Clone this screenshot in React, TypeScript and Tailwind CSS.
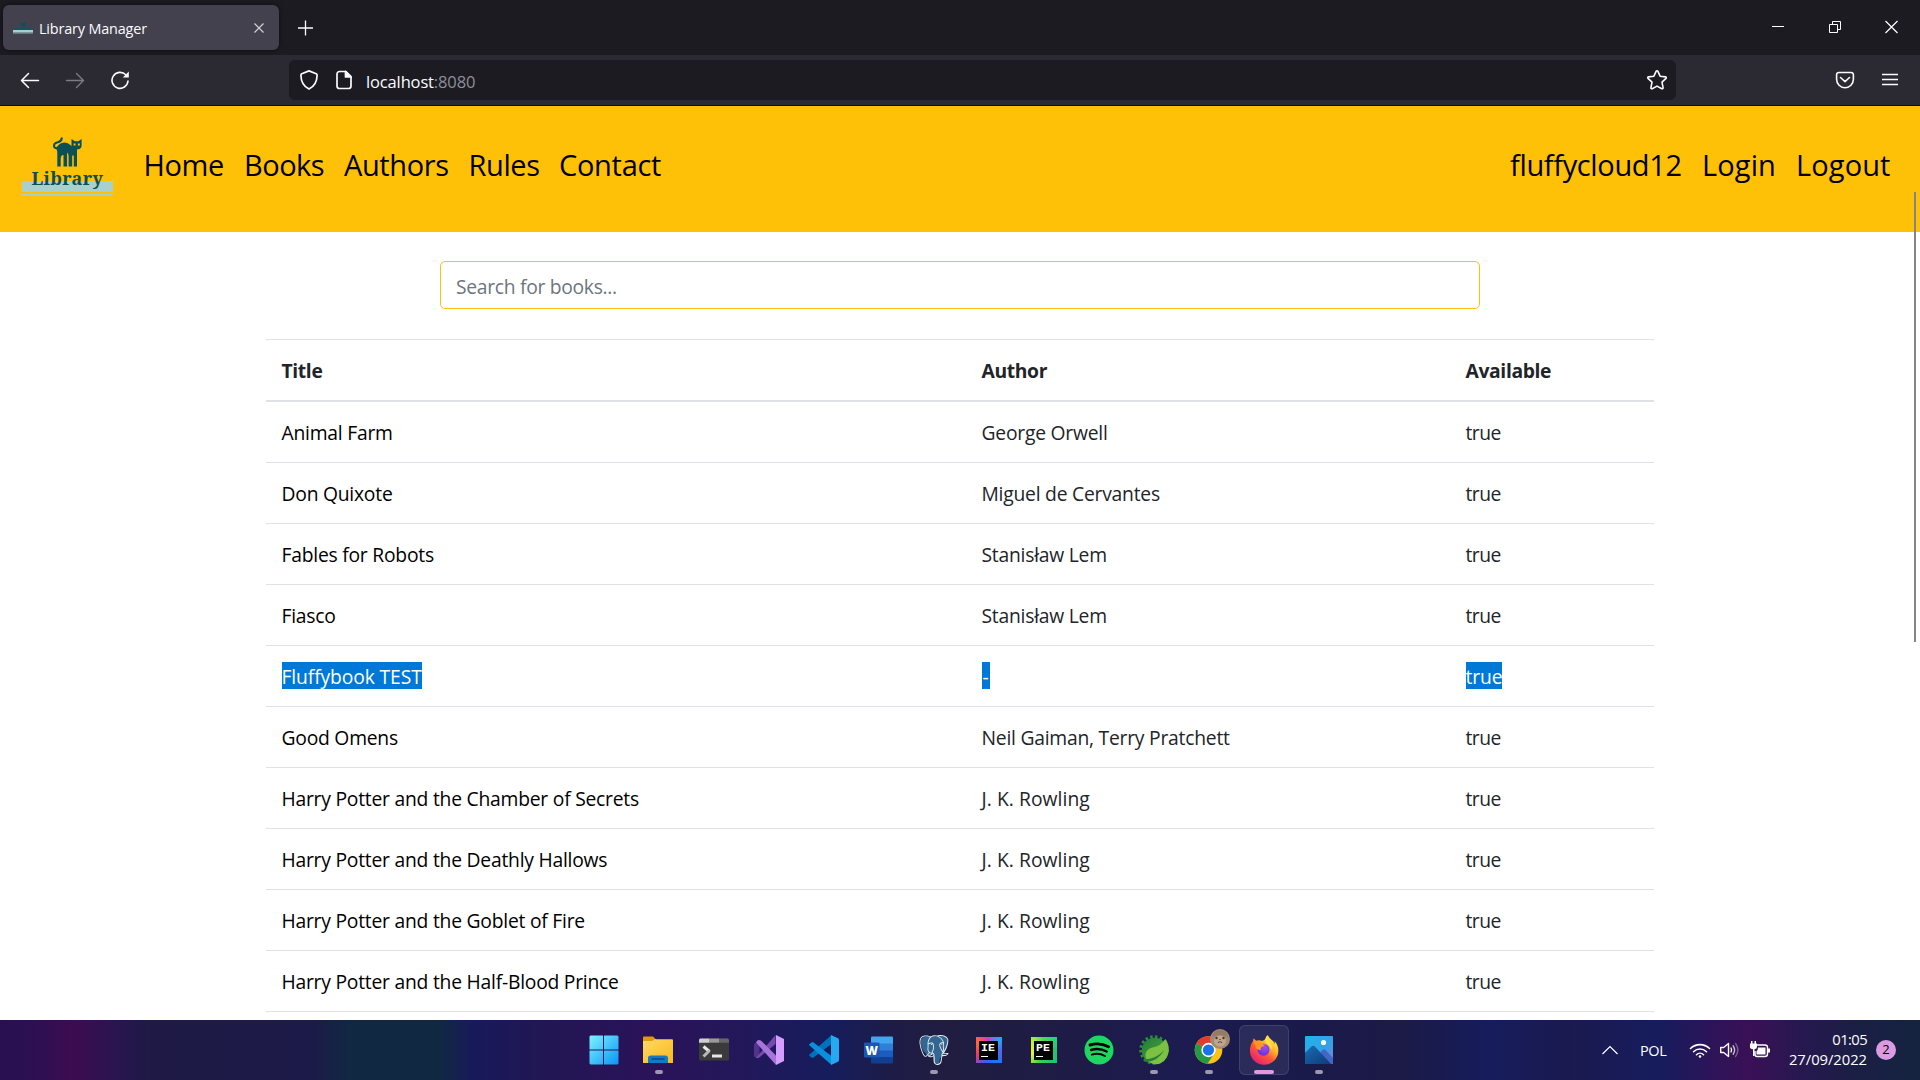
import React from "react";
import { SiPostgresql } from "react-icons/si";

const books = [
  { title: "Animal Farm", author: "George Orwell" },
  { title: "Don Quixote", author: "Miguel de Cervantes" },
  { title: "Fables for Robots", author: "Stanisław Lem" },
  { title: "Fiasco", author: "Stanisław Lem" },
  { title: "Fluffybook TEST", author: "-", selected: true },
  { title: "Good Omens", author: "Neil Gaiman, Terry Pratchett" },
  { title: "Harry Potter and the Chamber of Secrets", author: "J. K. Rowling" },
  { title: "Harry Potter and the Deathly Hallows", author: "J. K. Rowling" },
  { title: "Harry Potter and the Goblet of Fire", author: "J. K. Rowling" },
  { title: "Harry Potter and the Half-Blood Prince", author: "J. K. Rowling" },
];

/* ---------- browser chrome ---------- */

function TabStrip() {
  return (
    <div className="flex h-[55px] items-start bg-[#1c1b22]">
      <div className="mt-[5px] ml-[3px] flex h-[45px] w-[276px] items-center rounded-md bg-[#42414d] shadow-[0_0_4px_rgba(0,0,0,0.6)]">
        <svg className="ml-[10px] h-5 w-5" viewBox="0 0 20 20">
          <path d="M7.500 3.500l1 1.200h2.500L12.500 3.300v5H8z" fill="#0d5158" />
          <rect x="2" y="9" width="16" height="2.600" fill="#14545b" opacity=".8" />
          <rect x="0" y="12" width="20" height="2.600" fill="#a6d0d0" />
          <rect x="0" y="15" width="20" height=".6" fill="#a6d0d0" opacity=".6" />
        </svg>
        <span className="mt-[3px] ml-[6px] text-[14.4px] tracking-[-0.15px] whitespace-nowrap text-[#fbfbfe]">Library Manager</span>
        <svg className="mr-[14px] ml-auto h-3 w-3" viewBox="0 0 12 12" fill="none" stroke="#d0d0d6" strokeWidth="1.2">
          <path d="M1.5 1.5l9 9M10.5 1.5l-9 9" />
        </svg>
      </div>
      <svg className="mt-5 ml-[18px] h-4 w-4" viewBox="0 0 16 16" stroke="#fbfbfe" strokeWidth="1.3">
        <path d="M8.5 .5v15M1 8h15" />
      </svg>
      <div className="mt-5 mr-[21px] ml-auto flex items-center">
        <svg className="mr-[44px] h-[14px] w-3" viewBox="0 0 12 14" stroke="#fff"><path d="M0 6.5h12" /></svg>
        <svg className="mr-[42px] h-[14px] w-[14px]" viewBox="0 0 14 14" fill="none" stroke="#fff">
          <path d="M1.5 4.5h8v8h-8zM4.500 4.500v-3h8v8h-3" />
        </svg>
        <svg className="h-[14px] w-[15px]" viewBox="0 0 15 14" stroke="#fff" strokeWidth="1.200"><path d="M1.500 1l12 12M13.500 1l-12 12" /></svg>
      </div>
    </div>
  );
}

function Toolbar() {
  return (
    <div className="flex h-[51px] items-center border-b border-[#0c0c0d] bg-[#2b2a33]">
      <svg className="ml-5 h-5 w-5" viewBox="0 0 20 20" fill="none" stroke="#fbfbfe" strokeWidth="1.5" strokeLinecap="round" strokeLinejoin="round">
        <path d="M18.500 10.500h-17M8.500 3.500l-7 7 7 7" />
      </svg>
      <svg className="ml-[25px] h-5 w-5" viewBox="0 0 20 20" fill="none" stroke="#7c7b82" strokeWidth="1.4" strokeLinecap="round" strokeLinejoin="round">
        <path d="M1.500 10.500h17M11.500 3.500l7 7-7 7" />
      </svg>
      <svg className="ml-[25px] h-5 w-5" viewBox="0 0 20 20" fill="none" stroke="#fbfbfe" strokeWidth="1.600" strokeLinecap="round">
        <path d="M15.800 4.800A8 8 0 1 0 18 11" />
        <path d="M18.800 1.500v6h-6z" fill="#fbfbfe" stroke="none" />
      </svg>
      <div className="ml-[159px] flex h-10 w-[1387px] items-center rounded-md bg-[#1c1b22]">
        <svg className="ml-[10px] h-5 w-5" viewBox="0 0 20 20" fill="none" stroke="#fbfbfe" strokeWidth="1.700" strokeLinejoin="round">
          <path d="M10 .9l7.200 2.900a1.500 1.500 0 0 1 .9 1.400C18 11.500 16 16 10 19.100 4 16 2 11.500 1.900 5.200a1.500 1.500 0 0 1 .9-1.400z" />
        </svg>
        <svg className="ml-[15px] h-5 w-5" viewBox="0 0 20 20" fill="none" stroke="#fbfbfe" strokeWidth="1.700" strokeLinejoin="round">
          <path d="M12 1.500H5.500a2.500 2.500 0 0 0-2.500 2.500v12a2.500 2.500 0 0 0 2.500 2.500h9a2.500 2.500 0 0 0 2.500-2.500V6.500z" />
          <path d="M11.500 1.500v5.500h5.500z" fill="#fbfbfe" />
        </svg>
        <span className="mt-1 ml-[12px] text-[16.5px] tracking-[-0.14px] text-[#fbfbfe]">
          localhost<span className="text-[#8f8f9a]">:8080</span>
        </span>
        <svg className="mr-[8px] ml-auto h-[22px] w-[22px]" viewBox="0 0 22 22" fill="none" stroke="#fbfbfe" strokeWidth="1.600" strokeLinejoin="round">
          <path d="M10.200 2.200a.9.900 0 0 1 1.600 0l2.300 5 5.400.7a.9.900 0 0 1 .5 1.500l-4 3.800 1.100 5.600a.9.900 0 0 1-1.300.9L11 17.100l-4.800 2.600a.9.900 0 0 1-1.300-.9L6 13.200 2 9.400a.9.900 0 0 1 .5-1.500l5.400-.7z" />
        </svg>
      </div>
      <svg className="ml-[159px] h-5 w-5" viewBox="0 0 20 20" fill="none" stroke="#fbfbfe" strokeWidth="1.600" strokeLinecap="round" strokeLinejoin="round">
        <path d="M3.800 2.500h12.400A2.200 2.200 0 0 1 18.400 4.700v4.600a8.400 8.400 0 0 1-16.800 0V4.700A2.200 2.200 0 0 1 3.800 2.500z" />
        <path d="M5.500 7.500L10 11.700l4.500-4.200" />
      </svg>
      <svg className="ml-[27px] h-4 w-4" viewBox="0 0 16 16" stroke="#fbfbfe" strokeWidth="1.300">
        <path d="M0 2.500h16M0 7.500h16M0 12.500h16" />
      </svg>
    </div>
  );
}

/* ---------- page ---------- */

function LibraryLogo() {
  return (
    <svg className="mb-[5px] ml-[21px] h-[62px] w-[93px]" viewBox="0 0 93 62">
      <g transform="translate(31 1)" fill="#0b4f57" stroke="none">
        <path d="M9.800 1.300Q9.200 4.600 5.800 5.200Q1.800 6 2 9.200Q2.400 11.600 5.600 10.800" fill="none" stroke="#0b4f57" strokeWidth="2.100" strokeLinecap="round" />
        <path d="M5.300 29.500V16.500Q5.300 13 4 11.500 7 5.500 12.500 5.500 16 5.500 19 8.500q3 3 6 3.500v17.500h-3.200V18.500h-1.600v11h-3.600V19.500q0-3-1.500-4v14h-3.600V18q-2.800 0-2.800 4v7.500z" />
        <path d="M19.500 2l3.400 2.200h3.400L29.600 2v7.200q-.8 3.200-4.800 3.400-4.600-.5-5.300-3.600z" />
        <path d="M21.600 6.400h1.900v2h-1.900zM25.900 6.400h1.900v2h-1.900z" fill="#ffc107" />
      </g>
      <rect x="1" y="45" width="91" height="11" fill="#a8d0cd" />
      <rect x="1" y="58" width="91" height="1.600" fill="#a8d0cd" />
      <text x="10.500" y="49" fontFamily="'Noto Serif','Liberation Serif',serif" fontWeight="700" fontSize="18" textLength="71" lengthAdjust="spacing" fill="#0b4f57">Library</text>
    </svg>
  );
}

function Navbar() {
  return (
    <nav className="flex h-[126px] items-center bg-[#ffc107] text-[29px] tracking-[-0.4px] text-black">
      <LibraryLogo />
      <div className="mb-[9px] ml-[29.500px] flex">
        <a className="w-[100.500px]">Home</a>
        <a className="w-[100px] tracking-[-0.5px]">Books</a>
        <a className="w-[124.500px]">Authors</a>
        <a className="w-[90.500px]">Rules</a>
        <a className="tracking-[-0.3px]">Contact</a>
      </div>
      <div className="mb-[9px] ml-auto flex">
        <a className="w-[192px] tracking-[-0.35px]">fluffycloud12</a>
        <a className="w-[94px] tracking-[0.1px]">Login</a>
        <a className="w-[124px] tracking-[0.1px]">Logout</a>
      </div>
    </nav>
  );
}

function Cell({ children, selected = false }: { children: React.ReactNode; selected?: boolean }) {
  return (
    <span
      className={
        selected
          ? "block h-[27px] w-fit min-w-[8px] bg-[#0078d7] text-center leading-[29px] tracking-[-0.12px] text-white"
          : "block h-[27px] leading-[29px]"
      }
    >
      {children}
    </span>
  );
}

function BookTable() {
  return (
    <table className="mt-[30px] ml-[266px] w-[1388px] table-fixed border-separate border-spacing-0 text-left text-[19.3px] tracking-[-0.23px] text-[#212529]">
      <colgroup>
        <col className="w-[700px]" />
        <col className="w-[484px]" />
        <col />
      </colgroup>
      <thead>
        <tr className="tracking-[-0.35px] [&>th]:h-[63px] [&>th]:border-t [&>th]:border-b-2 [&>th]:border-[#dee2e6] [&>th]:px-[15.500px] [&>th]:pt-0 [&>th]:pb-[1px] [&>th]:font-bold">
          <th><Cell>Title</Cell></th>
          <th><Cell>Author</Cell></th>
          <th><Cell>Available</Cell></th>
        </tr>
      </thead>
      <tbody className="[&_td]:h-[61px] [&_td]:border-b [&_td]:border-[#dee2e6] [&_td]:px-[15.500px] [&_td]:pt-0 [&_td]:pb-[1px]">
        {books.map((b) => (
          <tr key={b.title}>
            <td className="text-black"><Cell selected={b.selected}>{b.title}</Cell></td>
            <td className={b.author === "J. K. Rowling" ? "tracking-[0.06px]" : ""}><Cell selected={b.selected}>{b.author}</Cell></td>
            <td className="tracking-[-0.5px]"><Cell selected={b.selected}>true</Cell></td>
          </tr>
        ))}
      </tbody>
    </table>
  );
}

/* ---------- taskbar ---------- */

const WindowsIcon = () => (
  <svg className="h-[30px] w-[30px]" viewBox="0 0 30 30">
    <defs>
      <linearGradient id="win" x1="0" y1="0" x2="1" y2="1">
        <stop offset="0" stopColor="#7df3ff" />
        <stop offset="1" stopColor="#0b93f5" />
      </linearGradient>
    </defs>
    <path fill="url(#win)" d="M1.500.5h12.500v14H.5V1.500zM15 .5h13.500l1 1v13H15zM.5 15.500H14V29.500H1.500l-1-1zM15 15.500h14.500v13l-1 1H15z" />
  </svg>
);

const FolderIcon = () => (
  <svg className="mr-[1px] h-[30px] w-[30px]" viewBox="0 0 30 30">
    <defs>
      <linearGradient id="fold" x1="0" y1="0" x2="1" y2="1">
        <stop offset="0" stopColor="#ffd968" />
        <stop offset="1" stopColor="#fbb917" />
      </linearGradient>
    </defs>
    <path d="M0 2.500q0-1 1-1h9l3.500 3.500h-2L8 8H0z" fill="#e19b06" />
    <path d="M0 6h9l3-1.800h17q1 0 1 1v22.800H0z" fill="url(#fold)" />
    <path d="M5 28v-5q0-2.500 2.500-2.500h15q2.500 0 2.500 2.500v5z" fill="#0f7cc9" />
    <path d="M9 24h12" stroke="#0a4a86" strokeWidth="1.300" strokeLinecap="round" />
  </svg>
);

const TerminalIcon = () => (
  <svg className="h-[30px] w-[30px]" viewBox="0 0 30 30">
    <rect y="3.500" width="30" height="22" rx="1.500" fill="#3b3b3b" />
    <path d="M1 3.500h9V7.700H0V4.500z" fill="#cfcfcf" />
    <path d="M10 3.500h10v4.200H10z" fill="#9a9a9a" />
    <path d="M20 3.500h9l1 1v3.200H20z" fill="#666" />
    <path d="M4.500 11.500l6 5" stroke="#e8e8e8" strokeWidth="3" />
    <path d="M10.500 15.500l-6 6" stroke="#b8b8b8" strokeWidth="3" />
    <path d="M13 19.500h10v3H13z" fill="#e6e6e6" />
  </svg>
);

const VisualStudioIcon = () => (
  <svg className="h-[30px] w-[30px]" viewBox="0 0 30 30">
    <path d="M0 9l2.500-1.500 3 2.500v10.500L2.500 23 0 21.500z" fill="#52328a" />
    <path d="M2 22.800L21.500 0v9L6.500 21.500Q4 24 2 22.800z" fill="#7748ad" />
    <path d="M2 7.500Q4 3.500 7.500 6L22 20.500V30z" fill="#a774db" />
    <path d="M22 0l8 4v22l-8 4z" fill="#d59dff" />
  </svg>
);

const VSCodeIcon = () => (
  <svg className="h-[30px] w-[30px]" viewBox="0 0 30 30">
    <path d="M.5 19.500L22 .5l.5 8.500L4.500 22.500q-1 .8-2 0l-2-1.500q-.8-.7 0-1.500z" fill="#0072bd" />
    <path d="M.5 10.500L22 29.500l.5-8.500L4.500 7.500q-1-.8-2 0l-2 1.500q-.8.700 0 1.500z" fill="#0a8fdc" />
    <path d="M22 0l7 3.300q1 .5 1 1.700v20q0 1.200-1 1.700L22 30z" fill="#27a9f2" />
  </svg>
);

const WordIcon = () => (
  <svg className="h-[30px] w-[30px]" viewBox="0 0 30 30">
    <path d="M7 2.500q0-1 1-1h20q1 0 1 1V9H7z" fill="#43a5ee" />
    <path d="M7 8.500h22V16H7z" fill="#2f7fd9" />
    <path d="M7 15.500h22v7H7z" fill="#1a5dbe" />
    <path d="M7 22h22v5.500q0 1-1 1H8q-1 0-1-1z" fill="#103f91" />
    <rect x="0" y="7.500" width="15.500" height="15" rx="1.200" fill="#1a56b4" />
    <text x="7.700" y="19.500" textAnchor="middle" fontFamily="'Open Sans'" fontWeight="800" fontSize="12" fill="#fff">W</text>
  </svg>
);

const PostgresIcon = () => (
  <div className="grid h-[31px] w-[30px] place-items-center">
    <svg className="col-start-1 row-start-1 h-[30px] w-[30px]" viewBox="0 0 30 30" fill="#336791">
      <path d="M2 5q2-4 8-4 5 0 7 .5 10-2 12 4 0 8-5 14l4 .5-7 3-1 6h-4l-1-9H8Q1 14 2 5z" />
    </svg>
    <SiPostgresql className="col-start-1 row-start-1 h-[30px] w-[30px] text-[#e6edf3]" />
  </div>
);

const JetBrainsIcon = ({ label, frame }: { label: string; frame: string }) => (
  <div className={`flex h-[26px] w-[26px] items-center justify-center ${frame}`}>
    <div className="flex h-[19px] w-[19px] flex-col bg-black pt-[1px] pl-[2px]">
      <span className="font-['Liberation_Mono'] text-[11.500px] leading-[11px] font-bold text-white">{label}</span>
      <span className="mt-[3px] h-[1.500px] w-[7px] bg-white" />
    </div>
  </div>
);

const SpotifyIcon = () => (
  <svg className="h-[30px] w-[30px]" viewBox="0 0 30 30">
    <circle cx="15" cy="15" r="14.500" fill="#1ed760" />
    <g fill="none" stroke="#000" strokeLinecap="round">
      <path d="M6 10Q15.500 7 24.500 11.700" strokeWidth="2.900" />
      <path d="M7 15Q15 12.500 22.700 16.500" strokeWidth="2.400" />
      <path d="M7.800 19.600Q14.500 17.500 21 21" strokeWidth="1.900" />
    </g>
  </svg>
);

const SpringIcon = () => (
  <svg className="h-[30px] w-[30px]" viewBox="0 0 30 30">
    <defs>
      <linearGradient id="spr" x1="0" y1="0" x2="1" y2="1">
        <stop offset="0" stopColor="#1f7d35" />
        <stop offset="1" stopColor="#55a845" />
      </linearGradient>
    </defs>
    <circle cx="15" cy="15" r="13.300" fill="none" stroke="#2c8a3b" strokeWidth="3" strokeDasharray="2.600 2.200" pathLength="82" />
    <circle cx="15.500" cy="15.500" r="12.700" fill="url(#spr)" />
    <path d="M26.500 4q3.500 5 3.300 11.500Q29 24 22 28q-6 3-12-1-4-3-3.500-8 1-5 7-6.500Q22 11 26.500 4z" fill="#7cc142" />
    <path d="M4.500 24.500Q18 24 25.500 14.500 19 26.500 7 27z" fill="#267f38" />
  </svg>
);

const ChromeIcon = () => (
  <div className="relative h-[30px] w-[30px]">
    <svg className="h-[30px] w-[30px]" viewBox="0 0 30 30">
      <circle cx="14.500" cy="15" r="13.800" fill="#fbc116" />
      <path d="M14.500 15L2.500 8.200A13.800 13.800 0 0 0 13.500 28.800L20.500 18z" fill="#279847" />
      <path d="M14.500 15L2.500 8.200A13.800 13.800 0 0 1 26.500 8.300H14.500z" fill="#e33b2e" />
      <circle cx="14.500" cy="15" r="7.200" fill="#fff" />
      <circle cx="14.500" cy="15" r="5.600" fill="#1a73e8" />
    </svg>
    <svg className="absolute -top-[6px] left-[16px] h-5 w-5" viewBox="0 0 20 20">
      <circle cx="10" cy="10" r="10" fill="#a58a72" />
      <path d="M2 8Q3 1 10 1t8 7q-8-4-16 0z" fill="#957b63" />
      <ellipse cx="10" cy="12" rx="6" ry="5.500" fill="#c0a68e" />
      <circle cx="6.500" cy="9" r="1.200" fill="#4a382e" />
      <circle cx="13.500" cy="9" r="1.200" fill="#4a382e" />
      <path d="M8 13.800q2-2.200 4 0M9.200 10.500h1.600" fill="none" stroke="#6b5040" strokeWidth="1.100" />
    </svg>
  </div>
);

const FirefoxIcon = () => (
  <svg className="h-[30px] w-[30px]" viewBox="0 0 30 30">
    <defs>
      <linearGradient id="ff" x1=".85" y1=".05" x2=".2" y2=".95">
        <stop offset="0" stopColor="#fff44f" />
        <stop offset=".35" stopColor="#ffb32c" />
        <stop offset=".6" stopColor="#ff5a36" />
        <stop offset="1" stopColor="#e81b78" />
      </linearGradient>
      <radialGradient id="globe" cx=".6" cy=".3" r=".8">
        <stop offset="0" stopColor="#a04bff" />
        <stop offset="1" stopColor="#5a2fd0" />
      </radialGradient>
    </defs>
    <path d="M18.500 0Q21 4 24 6q1 .5 1.200 3 .8-1.500.3-3 4 4 3.800 10A14 13.500 0 0 1 1 16Q.8 10 4 6.200q0-1.700.8-3 1 1.800 2.700 2.500Q10 4.500 13 6q4-1 5.500-6z" fill="url(#ff)" />
    <circle cx="14.500" cy="14.800" r="6" fill="url(#globe)" />
    <path d="M4.500 7Q9 5 13.500 9.200l2.500.3q-.5 2-3.500 2.500-1.500 1.500-.5 3Q6 15 6.500 10z" fill="#ff9526" />
    <path d="M18.500 0q-4 4-1.500 8 4.500 2.500 5.500 7 1-4-1-7Q18 5 18.500 0z" fill="#ffe14a" />
  </svg>
);

const PhotosIcon = () => (
  <svg className="h-[30px] w-[30px]" viewBox="0 0 30 30">
    <defs>
      <linearGradient id="pho" x1="0" y1="0" x2="1" y2="1">
        <stop offset="0" stopColor="#1eb4ec" />
        <stop offset=".6" stopColor="#35a0e6" />
        <stop offset="1" stopColor="#8c7ad8" />
      </linearGradient>
      <linearGradient id="mnt" x1="0" y1="0" x2="1" y2="1">
        <stop offset="0" stopColor="#1b6cb4" />
        <stop offset="1" stopColor="#0c3a78" />
      </linearGradient>
    </defs>
    <rect x="1" y="1" width="28" height="28" rx="1" fill="url(#pho)" />
    <path d="M15 19l3.500-4q1.500-1.500 3 0l7.500 8v6H18z" fill="#4166c4" />
    <path d="M1 18l6.500-6.500q1.700-1.500 3.300 0L27 29H1z" fill="url(#mnt)" />
    <circle cx="19.500" cy="7.500" r="2.600" fill="#fff" />
  </svg>
);

const apps: { name: string; icon: React.ReactNode; state?: "running" | "active" }[] = [
  { name: "start", icon: <WindowsIcon /> },
  { name: "explorer", icon: <FolderIcon />, state: "running" },
  { name: "terminal", icon: <TerminalIcon /> },
  { name: "visual-studio", icon: <VisualStudioIcon /> },
  { name: "vscode", icon: <VSCodeIcon /> },
  { name: "word", icon: <WordIcon /> },
  { name: "postgres", icon: <PostgresIcon />, state: "running" },
  { name: "idea", icon: <JetBrainsIcon label="IE" frame="bg-[conic-gradient(from_45deg,#2aa3f5,#5b62f0,#1a78f0,#3b5cf0,#f0386a,#ff6a30,#d03bc8,#2aa3f5)]" /> },
  { name: "pycharm", icon: <JetBrainsIcon label="PE" frame="bg-[conic-gradient(from_45deg,#2ad07a,#24c36c,#1fc47a,#35d24f,#e8f03c,#c8ee3a,#4fd85a,#2ad07a)]" /> },
  { name: "spotify", icon: <SpotifyIcon /> },
  { name: "spring", icon: <SpringIcon />, state: "running" },
  { name: "chrome", icon: <ChromeIcon />, state: "running" },
  { name: "firefox", icon: <FirefoxIcon />, state: "active" },
  { name: "photos", icon: <PhotosIcon />, state: "running" },
];

function AppButton({ icon, state }: { icon: React.ReactNode; state?: "running" | "active" }) {
  return (
    <div className="flex w-[55px] justify-center">
      <div
        className={
          state === "active"
            ? "flex h-[50px] w-[50px] flex-col items-center rounded-md border border-white/10 bg-white/8"
            : "flex h-[50px] w-[50px] flex-col items-center border border-transparent"
        }
      >
        <div className="mt-[8px] flex h-[32px] items-center">{icon}</div>
        {state === "running" && <span className="mt-[4px] h-1 w-2 rounded-full bg-[#9b98b0]" />}
        {state === "active" && <span className="mt-[4px] h-1 w-5 rounded-full bg-[#dc9be0]" />}
      </div>
    </div>
  );
}

function Taskbar() {
  return (
    <footer className="flex h-[60px] items-center bg-[linear-gradient(90deg,#28104f_0px,#2a1052_25px,#3c0d50_75px,#2a1450_115px,#1e1a45_150px,#1c1a48_310px,#112843_350px,#112843_440px,#18195a_475px,#211754_540px,#2b1259_650px,#24175a_730px,#161d5c_830px,#1d1c48_890px,#201d40_940px,#1e1b47_1080px,#1c1c50_1180px,#191a4c_1260px,#1c1a46_1400px,#161c5c_1490px,#1b1a50_1570px,#161c5c_1660px,#2c1459_1710px,#3a1056_1750px,#271850_1800px,#1a1f44_1860px,#14233f_1920px)] text-white">
      <div className="ml-[576px] flex">
        {apps.map((a) => (
          <AppButton key={a.name} icon={a.icon} state={a.state} />
        ))}
      </div>
      <svg className="ml-[256px] h-3 w-4" viewBox="0 0 16 12" fill="none" stroke="#fff" strokeWidth="1.200">
        <path d="M.5 10L8 2.500 15.500 10" />
      </svg>
      <span className="mt-[1px] ml-[22px] w-[27px] text-[14.500px] tracking-[-0.4px]">POL</span>
      <svg className="ml-[22px] h-5 w-[22px]" viewBox="0 0 22 20" fill="none" stroke="#fff" strokeWidth="1.600" strokeLinecap="round">
        <path d="M1.500 8.500a13.500 13.500 0 0 1 19 0M4.500 11.700a9.300 9.300 0 0 1 13 0M7.500 14.700a5 5 0 0 1 7 0" />
        <circle cx="11" cy="16.500" r="1.300" fill="#fff" stroke="none" />
      </svg>
      <svg className="ml-[8px] h-5 w-[22px]" viewBox="0 0 22 20" fill="none" stroke="#fff" strokeWidth="1.400" strokeLinecap="round" strokeLinejoin="round">
        <path d="M1.700 7.500h3L9.500 3.500v13L4.700 12.500h-3z" />
        <path d="M12 8q1.200 2 0 4" />
        <path d="M14.200 5.800q2.800 4.200 0 8.400" opacity=".75" />
        <path d="M16.600 3.600q4.500 6.400 0 12.800" opacity=".35" />
      </svg>
      <svg className="ml-[8px] h-5 w-[22px]" viewBox="0 0 22 20">
        <path d="M8 5h8q2.500 0 2.500 2.500v6.500q0 2.500-2.500 2.500H8q-2 0-2-2.500v-3" fill="none" stroke="#fff" strokeWidth="1.400" />
        <path d="M9 7.500h7.500v7H7.500v-3.500Q9 10.500 9 7.500z" fill="#fff" />
        <path d="M19 8.500h2v4h-2zM1 3.500h7v3.500q0 2-2.500 2.300V16H4V9.300Q1 9 1 7zM2 1h1.500v3H2zM5.500 1H7v3H5.500z" fill="#fff" />
      </svg>
      <div className="mb-[3px] ml-[18px] flex w-[78px] flex-col items-end text-[14.800px] leading-5 tracking-[-0.05px] whitespace-nowrap">
        <span className="tracking-[-0.6px]">01:05</span>
        <span>27/09/2022</span>
      </div>
      <span className="ml-[9px] flex h-5 w-5 items-center justify-center rounded-full bg-[#dc9be0] text-[13px] text-black">2</span>
    </footer>
  );
}

export default function App() {
  return (
    <div className="relative flex h-[1080px] w-[1920px] flex-col overflow-hidden bg-white font-['Open_Sans',sans-serif]">
      <TabStrip />
      <Toolbar />
      <Navbar />
      <main className="min-h-0 flex-1 overflow-hidden">
        <input
          className="mt-[29px] ml-[440px] block h-[48px] w-[1040px] rounded-[5px] border border-[#ffc107] px-[15px] pt-[3px] text-[19.300px] tracking-[-0.3px] outline-none placeholder:text-[#6c757d]"
          placeholder="Search for books..."
        />
        <BookTable />
      </main>
      <Taskbar />
      <div className="absolute top-[192px] left-[1914px] h-[450px] w-[2px] bg-[#858585]" />
    </div>
  );
}
